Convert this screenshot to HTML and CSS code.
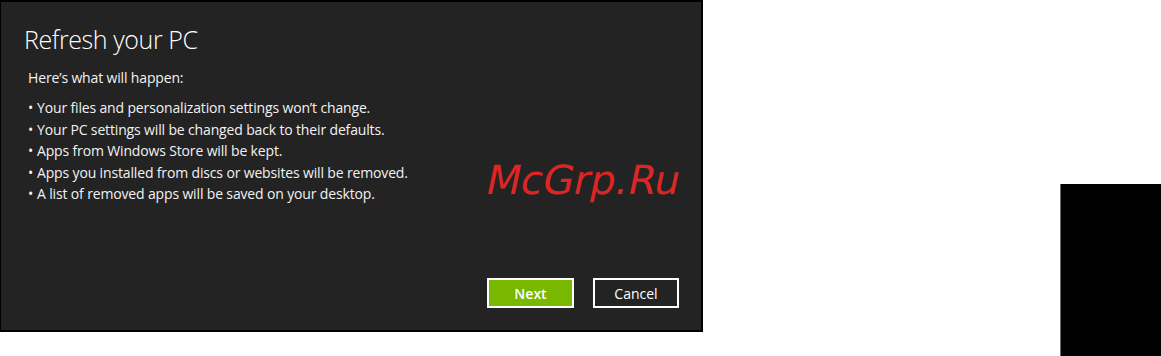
FILE: index.html
```html
<!DOCTYPE html>
<html>
<head>
<meta charset="utf-8">
<link rel="stylesheet" href="styles.css">
</head>
<body>
<div class="page">
  <div class="dialog">
    <h1 class="title">Refresh your PC</h1>
    <p class="lead">Here’s what will happen:</p>
    <ul class="list">
      <li>Your files and personalization settings won’t change.</li>
      <li>Your PC settings will be changed back to their defaults.</li>
      <li>Apps from Windows Store will be kept.</li>
      <li>Apps you installed from discs or websites will be removed.</li>
      <li>A list of removed apps will be saved on your desktop.</li>
    </ul>
    <div class="actions">
      <button class="btn btn-primary">Next</button>
      <button class="btn">Cancel</button>
    </div>
    <div class="watermark">McGrp.Ru</div>
  </div>
  <div class="side-block"></div>
</div>
</body>
</html>
```
FILE: styles.css
```css
html, body {
  margin: 0;
  padding: 0;
  background: #ffffff;
}
.page {
  display: flex;
  justify-content: space-between;
  align-items: flex-start;
  width: 1161px;
  height: 356px;
  overflow: hidden;
}
.dialog {
  position: relative;
  box-sizing: border-box;
  width: 703px;
  height: 332px;
  background: #232323;
  border: 2px solid #000;
  border-left-width: 1px;
  padding: 20px 0 0 23px;
  display: flex;
  flex-direction: column;
  font-family: "Open Sans", "Noto Sans", sans-serif;
  color: #f2f2f2;
}
.title {
  margin: 0;
  font-weight: 300;
  font-size: 25px;
  letter-spacing: -0.4px;
  line-height: 34px;
  color: #ffffff;
}
.lead {
  margin: 12px 0 0 4px;
  font-size: 14px;
  letter-spacing: -0.15px;
  line-height: 20px;
}
.list {
  margin: 9px 0 0 4px;
  padding: 0;
  list-style: none;
  font-size: 14px;
  letter-spacing: -0.15px;
  line-height: 21.5px;
}
.list li::before {
  content: "•";
  display: inline-block;
  width: 9px;
}
.actions {
  margin-top: auto;
  margin-bottom: 22px;
  margin-right: 22px;
  display: flex;
  justify-content: flex-end;
  gap: 19px;
}
.btn {
  box-sizing: border-box;
  width: 86px;
  height: 30px;
  border: 2px solid #ffffff;
  background: #232323;
  color: #ffffff;
  font-family: "Open Sans", "Noto Sans", sans-serif;
  font-size: 14px;
  padding: 0;
}
.btn-primary {
  width: 87px;
  background: #78b800;
  font-weight: 600;
}
.watermark {
  position: absolute;
  left: 486px;
  top: 154px;
  font-family: "DejaVu Sans", sans-serif;
  font-size: 40px;
  line-height: 48px;
  color: #dc2626;
  transform: skewX(-12deg);
}
.side-block {
  align-self: flex-end;
  box-sizing: border-box;
  width: 101px;
  height: 172px;
  background: #000;
  border-left: 1px solid #6a6a6a;
}
```
